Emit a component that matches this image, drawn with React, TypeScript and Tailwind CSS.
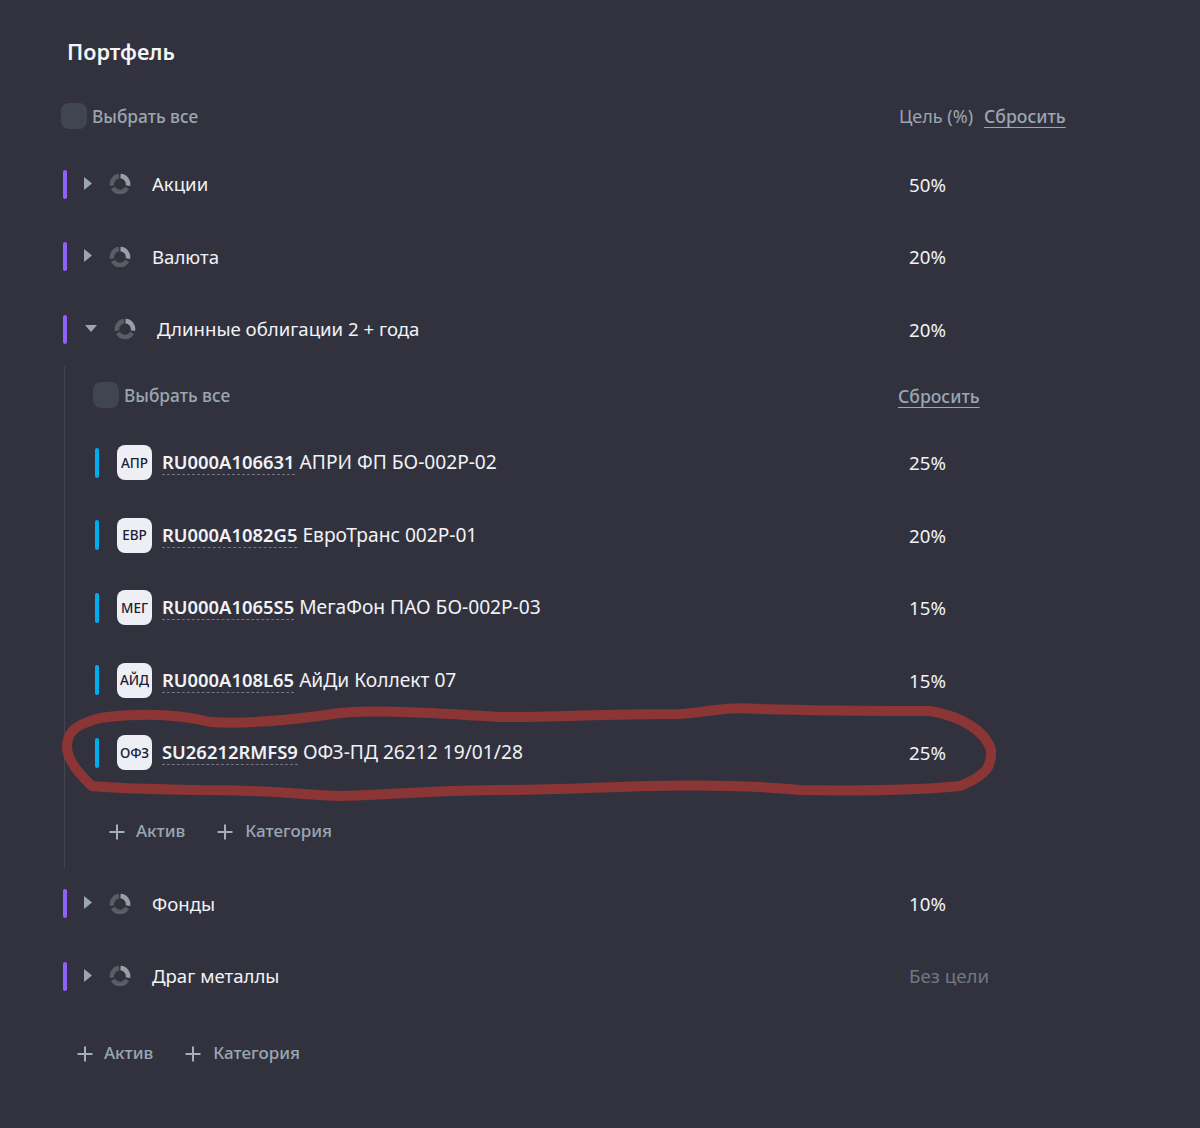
const bonds = [
  { tag: "АПР", id: "RU000A106631", name: "АПРИ ФП БО-002Р-02", target: "25%" },
  { tag: "ЕВР", id: "RU000A1082G5", name: "ЕвроТранс 002Р-01", target: "20%" },
  { tag: "МЕГ", id: "RU000A1065S5", name: "МегаФон ПАО БО-002Р-03", target: "15%" },
  { tag: "АЙД", id: "RU000A108L65", name: "АйДи Коллект 07", target: "15%" },
  { tag: "ОФЗ", id: "SU26212RMFS9", name: "ОФЗ-ПД 26212 19/01/28", target: "25%" },
];

function Ring() {
  return (
    <svg width="22" height="22" viewBox="0 0 22 22" fill="none" className="shrink-0">
      <path d="M11.5 3A8 8 0 0 1 18.9 12.6" stroke="#9d9da8" strokeWidth="4.5" />
      <path d="M18 14.8A8 8 0 0 1 4 14.8" stroke="#5c5c67" strokeWidth="4.5" />
      <path d="M3.1 12.6A8 8 0 0 1 10 3.1" stroke="#5c5c67" strokeWidth="4.5" />
    </svg>
  );
}

function Triangle({ open }: { open?: boolean }) {
  if (open) {
    return (
      <svg width="12" height="7" viewBox="0 0 12 7" className="ml-[18px] mt-[-1px] shrink-0">
        <path d="M0 0h12L6 7z" fill="#9aa7b2" />
      </svg>
    );
  }
  return (
    <svg width="8" height="13" viewBox="0 0 8 13" className="ml-[17px] mt-[-2px] shrink-0">
      <path d="M0 0l8 6.5L0 13z" fill="#9aa7b2" />
    </svg>
  );
}

function CategoryRow({ name, target, open }: { name: string; target: string; open?: boolean }) {
  return (
    <div className="flex h-[72.5px] items-center">
      <div className="h-[29px] w-[4px] shrink-0 rounded-full bg-[#9061f9]" />
      <Triangle open={open} />
      <div className="ml-[17px]">
        <Ring />
      </div>
      <div className="ml-[21px] text-[18.6px] text-[#f1f2f6]">{name}</div>
      <div
        className={
          target === "Без цели"
            ? "absolute left-[909px] text-[18.7px] text-[#6f7782]"
            : "absolute left-[909px] mt-[1px] text-[18.7px] text-[#f1f2f6]"
        }
      >
        {target}
      </div>
    </div>
  );
}

function SelectAll() {
  return (
    <div className="flex items-center gap-[5px]">
      <div className="h-[26px] w-[26px] rounded-lg bg-[#414550]" />
      <span className="mt-[1px] text-[17.3px] font-medium text-[#9aa7b2]">Выбрать все</span>
    </div>
  );
}

function Plus() {
  return (
    <svg width="16" height="16" viewBox="0 0 16 16" className="mt-[3px] shrink-0">
      <path d="M8 0.5v15M0.5 8h15" stroke="#a3afba" strokeWidth="2" />
    </svg>
  );
}

function AddButtons() {
  return (
    <div className="flex items-center gap-[32px] text-[17px] font-medium text-[#9aa7b2]">
      <div className="flex items-center gap-[11px]">
        <Plus />
        Актив
      </div>
      <div className="flex items-center gap-[12px]">
        <Plus />
        Категория
      </div>
    </div>
  );
}

export default function App() {
  return (
    <div
      className="relative min-h-[1128px] overflow-hidden bg-[#32323e] pl-[63px] pt-[32px]"
      style={{ fontFamily: '"Noto Sans", "Open Sans", sans-serif' }}
    >
      <h1 className="flex h-[40px] items-center pl-[4px] text-[21.6px] font-semibold text-[#f5f5f8]">Портфель</h1>

      <div className="relative mt-[28px] ml-[-2px] flex h-[32px] items-center">
        <SelectAll />
        <div className="absolute left-[838px] mt-[1px] flex items-center gap-[11px] text-[18px] text-[#9aa7b2]">
          <span>Цель (%)</span>
          <span className="text-[17.6px] font-medium underline underline-offset-4">Сбросить</span>
        </div>
      </div>

      <div className="mt-[16px]">
        <CategoryRow name="Акции" target="50%" />
        <CategoryRow name="Валюта" target="20%" />
        <CategoryRow name="Длинные облигации 2 + года" target="20%" open />
      </div>

      <div className="ml-[1px] border-l border-[#44444f] pl-[30px]">
        <div className="relative flex h-[61px] items-center pb-[2px]">
          <div className="ml-[-2px]">
            <SelectAll />
          </div>
          <span className="absolute left-[803px] mt-[2px] text-[17.6px] font-medium text-[#9aa7b2] underline underline-offset-4">
            Сбросить
          </span>
        </div>

        {bonds.map((b) => (
          <div key={b.id} className="flex h-[72.5px] items-center">
            <div className="h-[30px] w-[4px] shrink-0 rounded-full bg-[#00aeef]" />
            <div className="ml-[18px] flex h-[35px] w-[35px] shrink-0 items-center justify-center rounded-lg bg-[#eeeff4] text-[13.5px] font-medium text-[#1c2033]">
              {b.tag}
            </div>
            <div className="ml-[10px] text-[19.2px] text-[#f1f2f6]">
              <span className="border-b border-dashed border-[#6f7782] text-[18.4px] font-semibold">{b.id}</span> {b.name}
            </div>
            <div className="absolute left-[909px] mt-[1px] text-[18.7px] text-[#f1f2f6]">{b.target}</div>
          </div>
        ))}

        <div className="flex h-[78.5px] items-center pl-[14px] pt-[4px]">
          <AddButtons />
        </div>
      </div>

      <CategoryRow name="Фонды" target="10%" />
      <CategoryRow name="Драг металлы" target="Без цели" />

      <div className="flex h-[80px] items-center pl-[14px]">
        <AddButtons />
      </div>

      {/* red marker scribble over the last bond */}
      <svg width="1200" height="1128" viewBox="0 0 1200 1128" fill="none" className="pointer-events-none absolute left-0 top-0">
        <path
          d="M92 786C80 775 66 760 67 745C68 730 78 724 100 718C130 714 170 712 210 722C240 724 280 722 340 713C380 710 420 712 500 717C560 717 600 714 680 714C705 713 720 706 760 709C820 711 880 711 930 711C960 716 985 730 991 750C992 765 988 775 960 786C920 790 860 791 800 790C760 786 700 785 650 786C600 787 560 790 500 790C450 790 420 793 340 796C300 795 280 790 200 790C160 789 120 789 92 786Z"
          stroke="#8b3535"
          strokeWidth="10"
          strokeLinejoin="round"
        />
      </svg>
    </div>
  );
}
